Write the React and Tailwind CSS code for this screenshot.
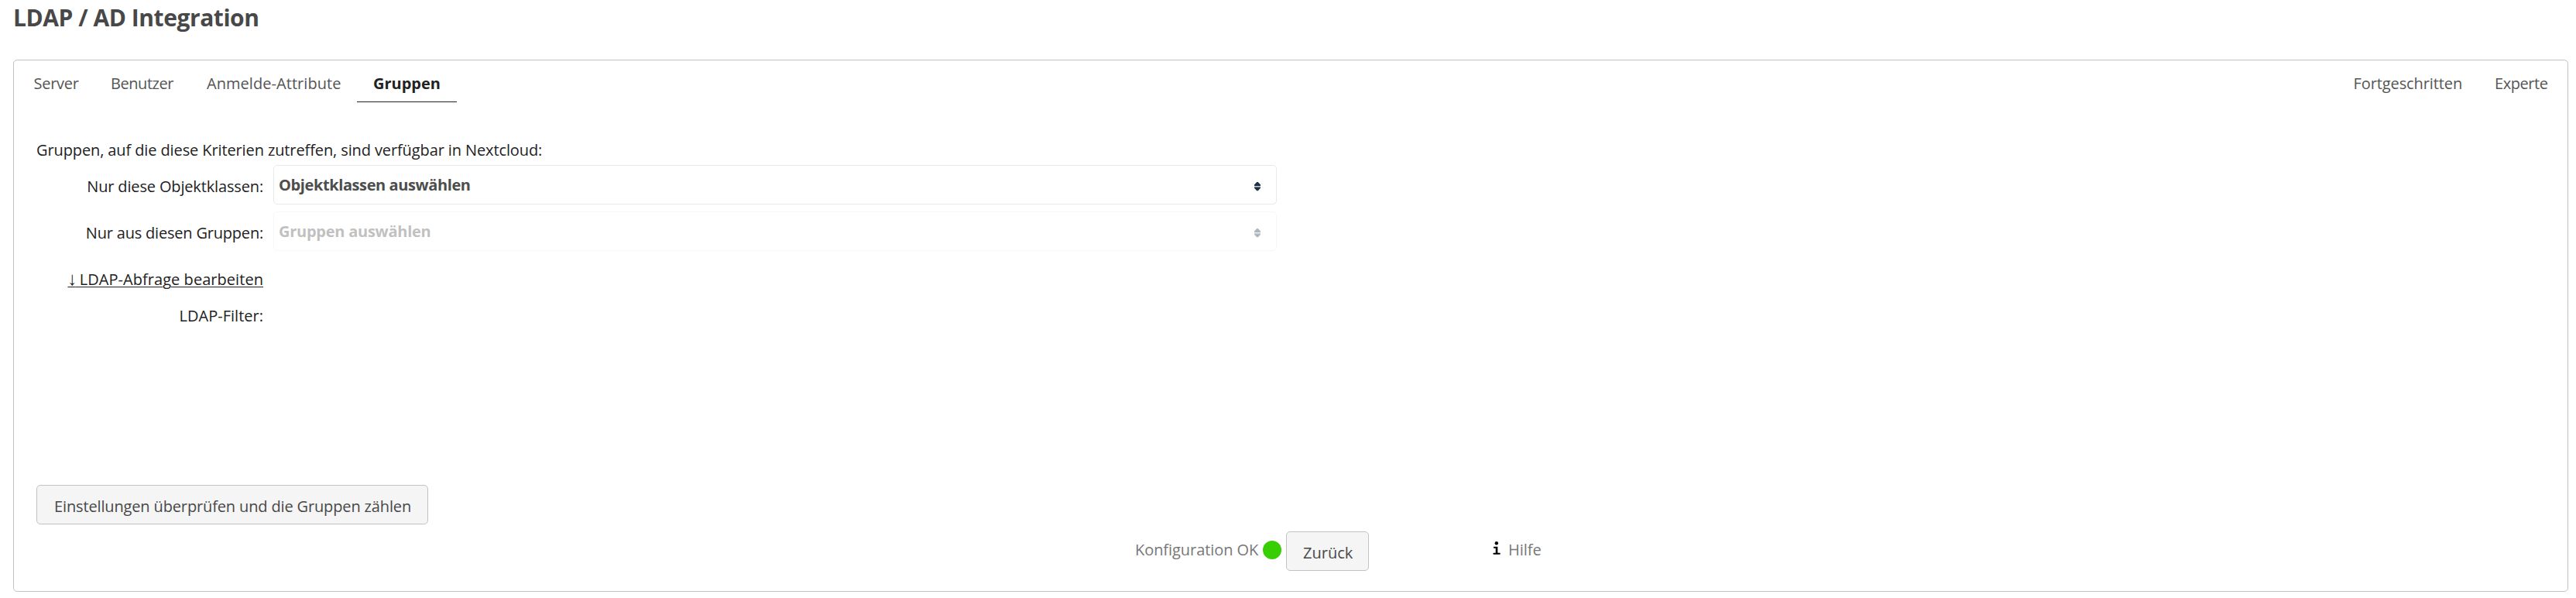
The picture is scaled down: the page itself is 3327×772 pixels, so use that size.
import React from "react";

function Sorter({ className = "" }) {
  return (
    <svg className={className} width="8" height="12" viewBox="0 0 8 12" fill="#1c3146">
      <path d="M3.200 0h1.600L8 3.600V5H0V3.600zM0 6.500h8v1.200L4.800 11.300H3.200L0 7.700z" />
      <path d="M0 5h8v1.500H0z" opacity=".25" />
    </svg>
  );
}

function InfoIcon() {
  return (
    <svg width="10" height="18" viewBox="0 0 10 18" fill="#000">
      <circle cx="4.8" cy="2.300" r="2.200" />
      <path d="M1.600 6.700H6.300V14.700H9q.7 0 .7.650v.7q0 .7-.7.7H1.100q-.7 0-.7-.7v-.7q0-.650.7-.650H3.700V8.800H1.600q-.7 0-.7-.7v-.7q0-.7.7-.7z" />
    </svg>
  );
}

function Select({ text, className = "", textClass }) {
  return (
    <div className={"flex h-[51px] w-[1296px] justify-between rounded-[5px] border border-[#e9e9e9] pr-[20px] pl-[6px] font-bold text-[#4d4d4d] " + className}>
      <span className={"pt-[10px] " + textClass}>{text}</span>
      <Sorter className="mt-[21px]" />
    </div>
  );
}

export default function App() {
  return (
    <div className="h-[772px] w-full overflow-hidden bg-white pr-[10px] pl-[17px] font-['Open_Sans','Noto_Sans',sans-serif] text-[20px] leading-[30px] whitespace-nowrap text-[#222]">
      <h2 className="h-[77px] text-[30px] leading-[46px] font-bold tracking-[-0.450px] text-[#484848]">LDAP / AD Integration</h2>
      <div className="flex h-[687px] flex-col rounded-[5px] border border-[#c3c3c3]">
        <nav className="flex h-[54px] pl-[4px] text-[#555]">
          <div className="w-[99px] pt-[15px] pl-[21.5px] tracking-[-0.250px]">Server</div>
          <div className="w-[125px] pt-[15px] pl-[22px] tracking-[-0.450px]">Benutzer</div>
          <div className="w-[215px] pt-[15px] pl-[21px] tracking-[0.050px]">Anmelde-Attribute</div>
          <div className="w-[129px] border-b border-[#222] pt-[15px] pl-[21px] font-bold text-[#222]">Gruppen</div>
          <div className="ml-auto w-[182px] pt-[15px] pl-[21.5px] tracking-[-0.100px]">Fortgeschritten</div>
          <div className="w-[116px] pt-[15px] pl-[22px] tracking-[-0.450px]">Experte</div>
        </nav>
        <main className="flex flex-col pt-[47px] pl-[29px]">
          <p className="tracking-[-0.110px]">Gruppen, auf die diese Kriterien zutreffen, sind verfügbar in Nextcloud:</p>
          <div className="mt-[4px] flex gap-[13px]">
            <label className="w-[293px] pt-[13px] text-right tracking-[-0.150px]">Nur diese Objektklassen:</label>
            <Select text="Objektklassen auswählen" textClass="tracking-[-0.400px]" />
          </div>
          <div className="mt-[9px] flex gap-[13px]">
            <label className="w-[293px] pt-[13px] text-right tracking-[-0.200px]">Nur aus diesen Gruppen:</label>
            <Select text="Gruppen auswählen" className="opacity-35" textClass="tracking-[-0.250px]" />
          </div>
          <div className="mt-[22px] w-[293px] text-right tracking-[0.050px]">
            <a className="underline decoration-1 underline-offset-[2px]">
              <span className="font-['Liberation_Sans',sans-serif] text-[24px] leading-[0px] tracking-[-2px]">↓</span> LDAP-Abfrage bearbeiten
            </a>
          </div>
          <div className="mt-[17px] w-[293px] text-right tracking-[0.020px]">LDAP-Filter:</div>
          <button className="mt-[203px] h-[51px] w-[506px] rounded-[5px] border border-[#c3c3c3] bg-[#f5f5f5] pt-[12px] pb-[7px] pl-[22px] text-left leading-[30px] tracking-[-0.140px] text-[#484848]">
            Einstellungen überprüfen und die Gruppen zählen
          </button>
          <div className="mt-[9px] flex h-[51px] pl-[1419px]">
            <span className="w-[165px] pt-[9px] tracking-[-0.060px] text-[#777]">Konfiguration OK</span>
            <span className="mt-[12px] size-[24px] rounded-full bg-[#38ce04]" />
            <button className="ml-[6px] h-[51px] w-[107px] rounded-[5px] border border-[#c3c3c3] bg-[#f5f5f5] pt-[12px] pb-[7px] pl-[21px] text-left leading-[30px] text-[#484848]">Zurück</button>
            <a className="ml-[160px] flex text-[#777]">
              <span className="w-[20px] pt-[13px]"><InfoIcon /></span>
              <span className="pt-[9px]">Hilfe</span>
            </a>
          </div>
        </main>
      </div>
    </div>
  );
}
